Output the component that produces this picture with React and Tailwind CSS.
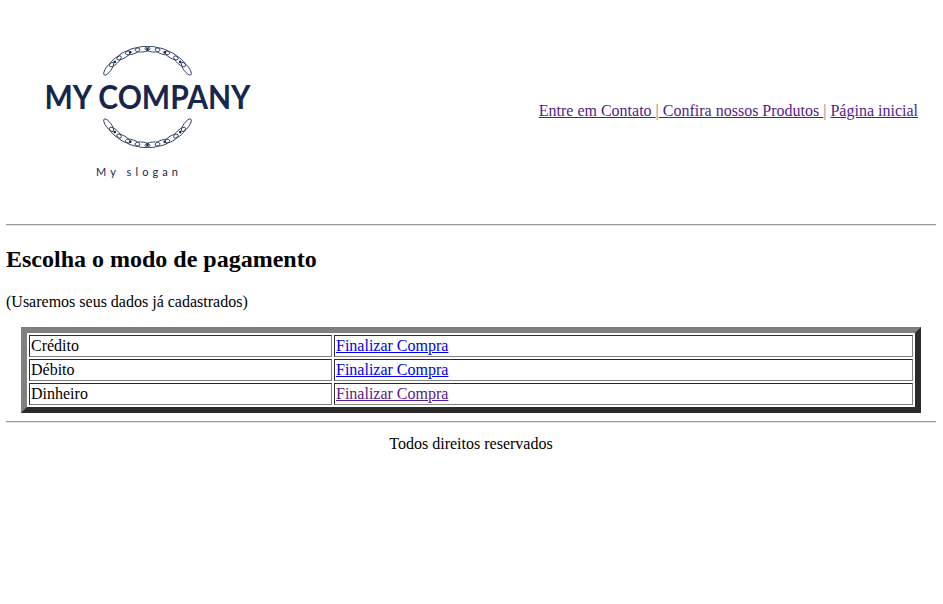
const navy = "#16264c";

const linkAngles = [-54, -42, -30, -18, -6, 6, 18, 30, 42, 54];
const dotAngles = [-43, -21, 0, 21, 43];

// one half of the chain ring, dir -1 is the upper arc and 1 the lower one
const ChainArc = ({ dir }) => {
    const cx = 141.5;
    const cy = 97;
    const r = 48;
    return (
        <g stroke={navy} fill="none">
            {linkAngles.map((a) => {
                const rad = (a * Math.PI) / 180;
                const x = cx + r * Math.sin(rad);
                const y = cy + dir * r * Math.cos(rad);
                return (
                    <ellipse
                        key={a}
                        cx={x}
                        cy={y}
                        rx="7.6"
                        ry="2.7"
                        strokeWidth="0.8"
                        transform={`rotate(${-dir * a} ${x} ${y})`}
                    />
                );
            })}
            {dotAngles.map((a) => {
                const rad = (a * Math.PI) / 180;
                return (
                    <circle
                        key={a}
                        cx={cx + r * Math.sin(rad)}
                        cy={cy + dir * r * Math.cos(rad)}
                        r="1.3"
                        fill={navy}
                        stroke="none"
                    />
                );
            })}
        </g>
    );
};

const Logo = () => (
    <svg width="282" height="224" viewBox="0 0 282 224">
        <ChainArc dir={-1} />
        <ChainArc dir={1} />
        <text
            x="38.5"
            y="109"
            textLength="206"
            lengthAdjust="spacingAndGlyphs"
            fill={navy}
            style={{ fontFamily: '"Lato", sans-serif', fontSize: "33px", fontWeight: 700 }}
        >
            MY COMPANY
        </text>
        <text
            x="90"
            y="176"
            fill={navy}
            textLength="82"
            style={{ fontFamily: '"Lato", sans-serif', fontSize: "11px" }}
        >
            My slogan
        </text>
    </svg>
);

const rows = [
    { name: "Crédito", linkClass: "text-[#0000ee] underline" },
    { name: "Débito", linkClass: "text-[#0000ee] underline" },
    { name: "Dinheiro", linkClass: "text-[#551a8b] underline" },
];

const cellClass =
    "border border-t-[#2b2b2b] border-l-[#2b2b2b] border-r-[#808080] border-b-[#808080] p-px";

const App = () => {
    return (
        <div className="min-h-[604px] bg-white pl-[6px] pr-[7px] text-[16px] leading-[18px] text-black font-['Liberation_Serif',serif]">

            {/* HEADER */}
            <div className="flex h-[224px] items-center justify-between pr-[18px]">
                <Logo />
                <div className="pb-[2px] text-[#808080]">
                    <a href="#" className="text-[#551a8b] underline">Entre em Contato </a>
                    |
                    <a href="#" className="text-[#551a8b] underline"> Confira nossos Produtos </a>
                    |{" "}
                    <a href="#" className="text-[#551a8b] underline">Página inicial</a>
                </div>
            </div>

            <hr className="border-t border-b border-t-[#9a9a9a] border-b-[#e4e4e4]" />

            {/* TITLE */}
            <h2 className="mt-5 mb-5 text-[24px] leading-[27px] font-bold">
                Escolha o modo de pagamento
            </h2>
            <p className="mb-4">(Usaremos seus dados já cadastrados)</p>

            {/* PAYMENT TABLE */}
            <table className="mx-auto w-[900px] table-fixed border-separate border-spacing-[2px] border-[6px] border-t-[#808080] border-l-[#808080] border-r-[#2b2b2b] border-b-[#2b2b2b]">
                <tbody>
                    {rows.map((row) => (
                        <tr key={row.name}>
                            <td className={`${cellClass} w-[303px]`}>{row.name}</td>
                            <td className={cellClass}>
                                <a href="#" className={row.linkClass}>Finalizar Compra</a>
                            </td>
                        </tr>
                    ))}
                </tbody>
            </table>

            <hr className="mt-2 border-t border-b border-t-[#9a9a9a] border-b-[#e4e4e4]" />

            <p className="mt-3 text-center">Todos direitos reservados</p>
        </div>
    );
};

export default App;
